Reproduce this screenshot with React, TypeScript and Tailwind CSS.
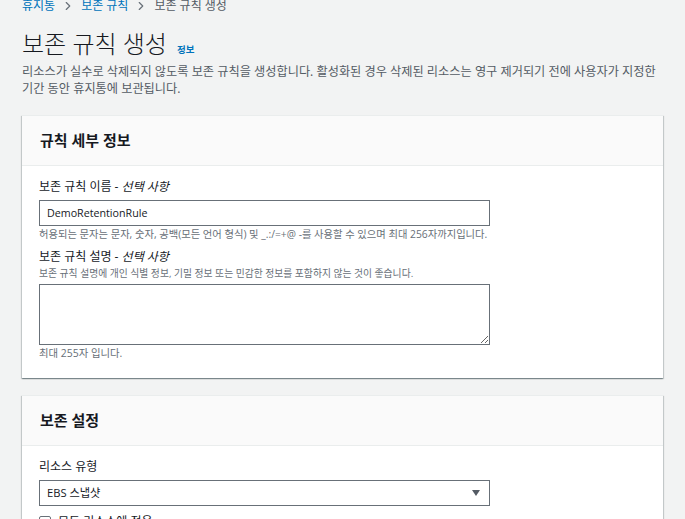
import { ChevronRight } from 'lucide-react';

const font = "font-['Open_Sans','Noto_Sans_CJK_KR',sans-serif]";

function Card({ title, children }: { title: string; children: React.ReactNode }) {
  return (
    <section className="bg-white border-t border-[#eaeded] shadow-[0_1px_1px_0_rgba(0,28,36,0.3),1px_1px_1px_0_rgba(0,28,36,0.15),-1px_1px_1px_0_rgba(0,28,36,0.15)]">
      <div className="h-[50px] bg-[#fafafa] border-b border-[#eaeded] flex items-center px-[18px]">
        <h2 className="text-[15px] font-bold text-[#16191f]">{title}</h2>
      </div>
      <div className="px-[17px] pt-[12px] pb-[16px]">{children}</div>
    </section>
  );
}

function Label({ text, optional }: { text: string; optional?: boolean }) {
  return (
    <div className="text-[12px] leading-[17px] text-[#16191f]">
      {text}
      {optional && (
        <>
          {' - '}
          <i>선택 사항</i>
        </>
      )}
    </div>
  );
}

export default function App() {
  return (
    <div className={`min-h-screen bg-[#f2f3f3] px-[22px] ${font} overflow-hidden`}>
      {/* breadcrumb */}
      <nav className="mt-[-3px] flex items-center text-[12px] leading-[17px]">
        <span className="text-[#0073bb]">휴지통</span>
        <ChevronRight className="w-[14px] h-[14px] mx-[6px] text-[#687078]" strokeWidth={2} />
        <span className="text-[#0073bb]">보존 규칙</span>
        <ChevronRight className="w-[14px] h-[14px] mx-[6px] text-[#687078]" strokeWidth={2} />
        <span className="text-[#545b64]">보존 규칙 생성</span>
      </nav>

      <div className="mt-[14px] flex items-baseline gap-[10px]">
        <h1 className="text-[24px] leading-[32px] font-light text-[#16191f]">보존 규칙 생성</h1>
        <span className="text-[9.5px] font-bold text-[#0073bb]">정보</span>
      </div>
      <p className="mt-[3px] text-[12.2px] leading-[17px] text-[#545b64]">
        리소스가 실수로 삭제되지 않도록 보존 규칙을 생성합니다. 활성화된 경우 삭제된 리소스는 영구 제거되기 전에 사용자가 지정한 기간 동안 휴지통에 보관됩니다.
      </p>

      <div className="mt-[18px] flex flex-col gap-[17px]">
        <Card title="규칙 세부 정보">
          <Label text="보존 규칙 이름" optional />
          <div className="mt-[5px] w-[451px] h-[26px] border border-[#687078] px-[7px] flex items-center text-[10.7px] text-[#16191f]">
            DemoRetentionRule
          </div>
          <div className="text-[10.3px] leading-[17px] text-[#687078]">
            허용되는 문자는 문자, 숫자, 공백(모든 언어 형식) 및 _.:/=+@ -를 사용할 수 있으며 최대 256자까지입니다.
          </div>
          <div className="mt-[5px]">
            <Label text="보존 규칙 설명" optional />
          </div>
          <div className="text-[9.8px] leading-[17px] text-[#687078]">
            보존 규칙 설명에 개인 식별 정보, 기밀 정보 또는 민감한 정보를 포함하지 않는 것이 좋습니다.
          </div>
          <textarea className="mt-[2px] block w-[451px] h-[61px] border border-[#687078] resize-y outline-none" />
          <div className="text-[10.4px] leading-[17px] text-[#687078]">최대 255자 입니다.</div>
        </Card>

        <Card title="보존 설정">
          <Label text="리소스 유형" />
          <div className="mt-[5px] w-[451px] h-[26px] border border-[#687078] pl-[7px] pr-[9px] flex items-center justify-between text-[11.2px] text-[#16191f]">
            <span>EBS 스냅샷</span>
            <svg width="8" height="6" viewBox="0 0 8 6" className="text-[#545b64]">
              <path d="M0 0h8L4 6z" fill="currentColor" />
            </svg>
          </div>
          <label className="mt-[7px] flex items-center gap-[7px] text-[12px] leading-[17px] text-[#16191f]">
            <span className="w-[12px] h-[12px] border border-[#687078] rounded-[2px] bg-white" />
            모든 리소스에 적용
          </label>
        </Card>
      </div>
    </div>
  );
}
